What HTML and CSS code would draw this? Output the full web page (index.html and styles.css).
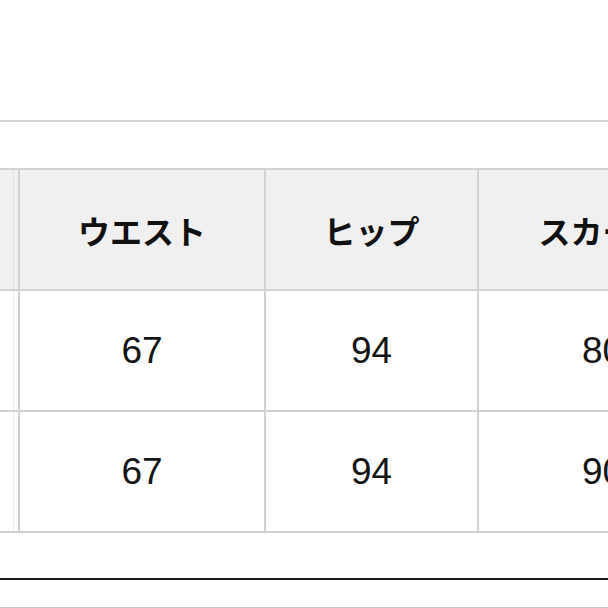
FILE: index.html
```html
<!DOCTYPE html>
<html lang="ja">
<head>
<meta charset="utf-8">
<link rel="stylesheet" href="styles.css">
</head>
<body>
<div class="page">
  <div class="rule-top"></div>
  <div class="table-wrap">
    <table class="size-table">
      <colgroup>
        <col class="c1"><col class="c2"><col class="c3"><col class="c4">
      </colgroup>
      <thead>
        <tr>
          <th class="first"></th>
          <th>ウエスト</th>
          <th>ヒップ</th>
          <th>スカート</th>
        </tr>
      </thead>
      <tbody>
        <tr>
          <td class="first"></td>
          <td>67</td>
          <td>94</td>
          <td>80</td>
        </tr>
        <tr>
          <td class="first"></td>
          <td>67</td>
          <td>94</td>
          <td>90</td>
        </tr>
      </tbody>
    </table>
  </div>
  <div class="rule-dark"></div>
  <div class="rule-light"></div>
</div>
</body>
</html>
```

FILE: styles.css
```css
html, body {
  margin: 0;
  padding: 0;
  background: #ffffff;
  overflow: hidden;
}

.page {
  width: 608px;
  height: 608px;
  overflow: hidden;
  padding-top: 120px;
  box-sizing: border-box;
}

.rule-top {
  height: 0;
  border-top: 2px solid #d4d4d4;
}

.table-wrap {
  margin-top: 46px;
  width: 608px;
  overflow: hidden;
}

.size-table {
  border-collapse: separate;
  border-spacing: 0;
  table-layout: fixed;
  width: 728px;
}

.c1 { width: 20px; }
.c2 { width: 246px; }
.c3 { width: 213px; }
.c4 { width: 249px; }

.size-table th,
.size-table td {
  height: 119px;
  padding: 0;
  text-align: center;
  vertical-align: middle;
  border-right: 2px solid #d2d2d2;
  border-bottom: 2px solid #d2d2d2;
  box-sizing: content-box;
}

.size-table th {
  border-top: 2px solid #d2d2d2;
  background: #f0f0f0;
  font-family: "Noto Sans CJK JP", "Noto Sans", sans-serif;
  font-weight: 700;
  font-size: 32px;
  color: #111111;
  line-height: 1;
}

.size-table td {
  background: #ffffff;
  font-family: "Liberation Sans", Arial, sans-serif;
  font-weight: 400;
  font-size: 37px;
  color: #151515;
  line-height: 1;
}

.size-table .first {
  box-shadow: inset -4px 0 0 #f0f0f0, inset -5px 0 0 #e2e2e2;
}

.size-table td.first {
  box-shadow: inset -4px 0 0 #ffffff, inset -5px 0 0 #ececec;
}

.rule-dark {
  margin-top: 45px;
  height: 0;
  border-top: 2px solid #1c1c1c;
}

.rule-light {
  margin-top: 27px;
  height: 0;
  border-top: 1px solid #c8c8c8;
}
```
